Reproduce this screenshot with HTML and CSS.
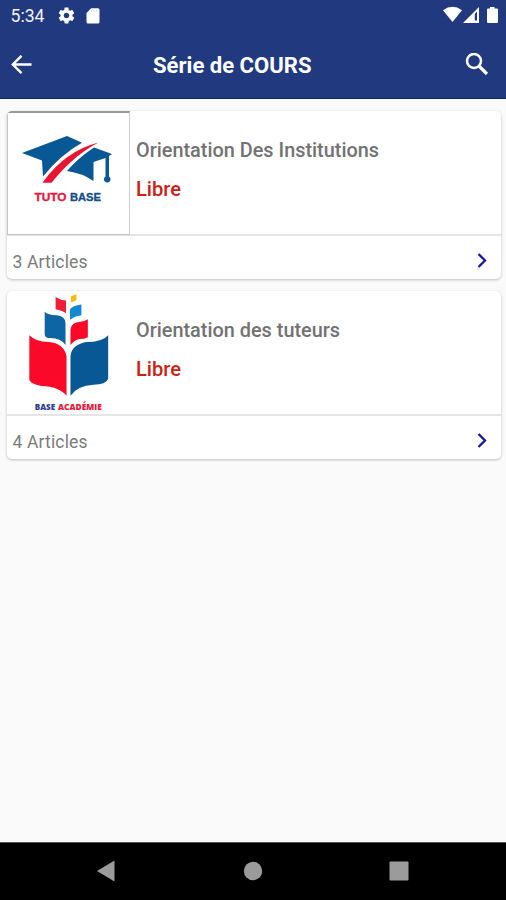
FILE: index.html
```
<!DOCTYPE html>
<html lang="fr">
<head>
<meta charset="utf-8">
<title>Série de COURS</title>
<link rel="stylesheet" href="styles.css">
</head>
<body>
<div class="screen">
  <header class="header">
    <div class="status">
      <span class="clock"><svg width="36" height="20" viewBox="0 0 36 20"><text x="-0.500" y="16" textLength="34" lengthAdjust="spacingAndGlyphs">5:34</text></svg></span>
      <svg class="gear" width="19" height="19" viewBox="0 0 24 24"><path fill="#fff" d="M19.43 12.98c.04-.32.07-.64.07-.98s-.03-.66-.07-.98l2.11-1.65c.19-.15.24-.42.12-.64l-2-3.46c-.12-.22-.39-.3-.61-.22l-2.49 1c-.52-.4-1.08-.73-1.69-.98l-.38-2.65C14.46 2.18 14.25 2 14 2h-4c-.25 0-.46.18-.49.42l-.38 2.65c-.61.25-1.17.59-1.69.98l-2.49-1c-.23-.09-.49 0-.61.22l-2 3.46c-.13.22-.07.49.12.64l2.11 1.65c-.04.32-.07.65-.07.98s.03.66.07.98l-2.11 1.65c-.19.15-.24.42-.12.64l2 3.46c.12.22.39.3.61.22l2.49-1c.52.4 1.08.73 1.69.98l.38 2.65c.03.24.24.42.49.42h4c.25 0 .46-.18.49-.42l.38-2.65c.61-.25 1.17-.59 1.69-.98l2.49 1c.23.09.49 0 .61-.22l2-3.46c.12-.22.07-.49-.12-.64l-2.11-1.65zM12 15.500c-1.930 0-3.500-1.570-3.500-3.500s1.570-3.500 3.500-3.500 3.500 1.570 3.500 3.500-1.570 3.500-3.500 3.500z"/></svg>
      <svg class="sd" width="14" height="16" viewBox="0 0 14 16"><path fill="#fff" d="M5.200 0.200H12Q13.500.2 13.500 1.700V14Q13.500 15.500 12 15.500H2Q.5 15.500.5 14V5z"/><path d="M5.500 2v2M8 2v2M10.500 2v2" stroke="#dde1ee" stroke-width="1"/></svg>
      <svg class="signals" width="56" height="18" viewBox="0 0 56 18">
        <path fill="#fff" d="M0 4.200Q9.500-2.600 19 4.200L9.500 16z"/>
        <path fill="#fff" fill-rule="evenodd" d="M20 17L36 1v16zM31.800 8v6.500h2.200V5.600z"/>
        <path fill="#fff" d="M47 1h4.500v1.500H54q1 0 1 1V16q0 1-1 1h-9q-1 0-1-1V3.500q0-1 1-1h2z"/>
      </svg>
    </div>
    <div class="appbar">
      <svg class="back" width="22" height="20" viewBox="0 0 22 20"><path d="M20.500 9.500H2M10.500 .8L1.800 9.500l8.700 8.700" fill="none" stroke="#fff" stroke-width="2.400"/></svg>
      <h1 class="title"><svg width="162" height="30" viewBox="0 0 162 30"><text x="0" y="23" textLength="158.500" lengthAdjust="spacingAndGlyphs">Série de COURS</text></svg></h1>
      <svg class="search" width="24" height="24" viewBox="0 0 24 24"><circle cx="9" cy="8" r="7" fill="none" stroke="#fff" stroke-width="2.500"/><path d="M14 13l8 8" stroke="#fff" stroke-width="3.200"/></svg>
    </div>
  </header>
  <main class="list">
    <article class="card">
      <div class="top">
        <svg class="thumb framed" viewBox="0 0 121 121">
          <path fill="#075895" d="M14 40L59 23 74 29.700Q52 42 35 63.500L34 47.500z"/>
          <path fill="#075895" d="M86 34.500L104 41 101 43V63.500A3.300 3.300 0 1 1 97.500 63.500V45L85.500 49V68Q74 60 59 58Q70 45 86 34.500z"/>
          <path fill="#e81432" d="M90.500 29.500Q66 42 43.500 69.700H34.500Q57 38 90.500 29.500z"/>
          <g class="tuto-name"><text class="red" x="26.500" y="87.500" textLength="32" lengthAdjust="spacingAndGlyphs">TUTO</text><text class="navy" x="62" y="87.500" textLength="31" lengthAdjust="spacingAndGlyphs">BASE</text></g>
        </svg>
        <div class="info">
          <h2><svg width="250" height="28" viewBox="0 0 250 28"><text x="0" y="20" textLength="243" lengthAdjust="spacingAndGlyphs">Orientation Des Institutions</text></svg></h2>
          <p class="price"><svg width="60" height="28" viewBox="0 0 60 28"><text x="0" y="20" textLength="45" lengthAdjust="spacingAndGlyphs">Libre</text></svg></p>
        </div>
      </div>
      <div class="foot">
        <svg class="count" width="80" height="26" viewBox="0 0 80 26"><text x="-0.500" y="19.500" textLength="75" lengthAdjust="spacing">3 Articles</text></svg>
        <svg width="12" height="16" viewBox="0 0 12 16"><path d="M1.500 1L8 7.500 1.500 14" fill="none" stroke="#1717a0" stroke-width="2.300"/></svg>
      </div>
    </article>
    <article class="card">
      <div class="top">
        <svg class="thumb" viewBox="0 0 124 124">
          <path fill="#fbb80b" d="M64.500 5Q66 4 70 3V8.500Q68 10 64.500 11z"/>
          <path fill="#ee1d38" d="M49 5.500Q54 9 59.500 9V22Q56 19.500 49 18z"/>
          <path fill="#1687d1" d="M63.500 18Q66 14 75 13V24Q68 25 63.500 28.500z"/>
          <path fill="#0d65a4" d="M38 20.500Q41 24 50 24 59 25 59 32V54Q54 47 44 47 38 47 38 43z"/>
          <path fill="#fa0929" d="M64 38Q65 31 74 30.500 78 30.500 81.500 28V46Q78 48 73 48 68 49 64 54z"/>
          <path fill="#fa0929" d="M22.500 44Q28 50 42 51 57 52 60 65V105Q54 98 43 96 25 95 22.500 89z"/>
          <path fill="#075894" d="M64 65Q65 54 80 51 96 51 102 44V88Q100 94 87 94 71 95 64 105z"/>
          <g class="base-name"><text class="blue" x="28" y="119" textLength="20.500" lengthAdjust="spacingAndGlyphs">BASE</text><text class="red" x="51.500" y="119" textLength="44" lengthAdjust="spacingAndGlyphs">ACADÉMIE</text></g>
        </svg>
        <div class="info">
          <h2><svg width="250" height="28" viewBox="0 0 250 28"><text x="0" y="20" textLength="204" lengthAdjust="spacingAndGlyphs">Orientation des tuteurs</text></svg></h2>
          <p class="price"><svg width="60" height="28" viewBox="0 0 60 28"><text x="0" y="20" textLength="45" lengthAdjust="spacingAndGlyphs">Libre</text></svg></p>
        </div>
      </div>
      <div class="foot">
        <svg class="count" width="80" height="26" viewBox="0 0 80 26"><text x="-0.500" y="19.500" textLength="75" lengthAdjust="spacing">4 Articles</text></svg>
        <svg width="12" height="16" viewBox="0 0 12 16"><path d="M1.500 1L8 7.500 1.500 14" fill="none" stroke="#1717a0" stroke-width="2.300"/></svg>
      </div>
    </article>
  </main>
  <nav class="nav">
    <svg width="20" height="22" viewBox="0 0 20 22"><path d="M1 11L18.500.5v21z" fill="#9b9b9b"/></svg>
    <svg width="20" height="20" viewBox="0 0 20 20"><circle cx="10" cy="10" r="9.200" fill="#9b9b9b"/></svg>
    <svg width="20" height="20" viewBox="0 0 20 20"><rect x=".5" y=".5" width="19" height="19" rx="1" fill="#9b9b9b"/></svg>
  </nav>
</div>
</body>
</html>
```
FILE: styles.css
```
* { box-sizing: border-box; }
body { margin: 0; font-family: Roboto, sans-serif; }
h1, h2, p { margin: 0; }
svg { display: block; flex: none; }
.screen { width: 506px; height: 900px; display: flex; flex-direction: column; background: #fafafa; }
.header { height: 99px; background: #21397f; border-bottom: 1px solid #14226c; }
.status { height: 32px; padding: 6px 7px 0 11px; display: flex; align-items: flex-start; }
.clock text { font-size: 17.5px; fill: #f0f2f8; }
.gear { margin: 0 0 0 10px; }
.sd { margin: 2px 0 0 10px; }
.signals { margin-left: auto; }
.appbar { height: 65px; padding: 0 17px 0 11px; display: flex; align-items: center; }
.title { margin-left: 120px; }
.title text { font-size: 22px; font-weight: 700; fill: #fff; }
.search { margin-left: auto; }
.list { flex: 1; padding: 12px 5px 0 7px; display: flex; flex-direction: column; gap: 12px; }
.card { height: 168px; background: #fff; border-radius: 5px; box-shadow: 0 1px 3px rgba(0, 0, 0, .24); overflow: hidden; }
.top { height: 125px; display: flex; border-bottom: 2px solid #e5e5e5; }
.thumb { width: 123px; height: 124px; }
.framed { border: 1px solid #c5c5c5; border-top: 2px solid #999; border-right-color: #d0d0d0; }
.info { padding: 26px 0 0 6px; }
.info h2 text { font-size: 19.5px; font-weight: 500; fill: #727272; }
.price { margin-top: 11px; }
.price text { font-size: 19.5px; font-weight: 500; fill: #cb2214; }
.tuto-name text { font: 700 10.5px "Liberation Sans", sans-serif; stroke-width: .3px; }
.base-name text { font: 800 8px "Open Sans", sans-serif; }
.red { fill: #e3183b; stroke: #e3183b; stroke-width: 0; }
.navy { fill: #154b87; stroke: #154b87; }
.blue { fill: #2b3f99; }
.foot { height: 43px; padding: 6px 12px 0 6px; display: flex; align-items: center; justify-content: space-between; }
.count text { font-size: 17.5px; fill: #7b7b7b; }
.nav { height: 58px; background: #000; border-top: 1px solid #555; display: flex; align-items: center; justify-content: space-between; padding: 0 97px 2px 96px; }
```
